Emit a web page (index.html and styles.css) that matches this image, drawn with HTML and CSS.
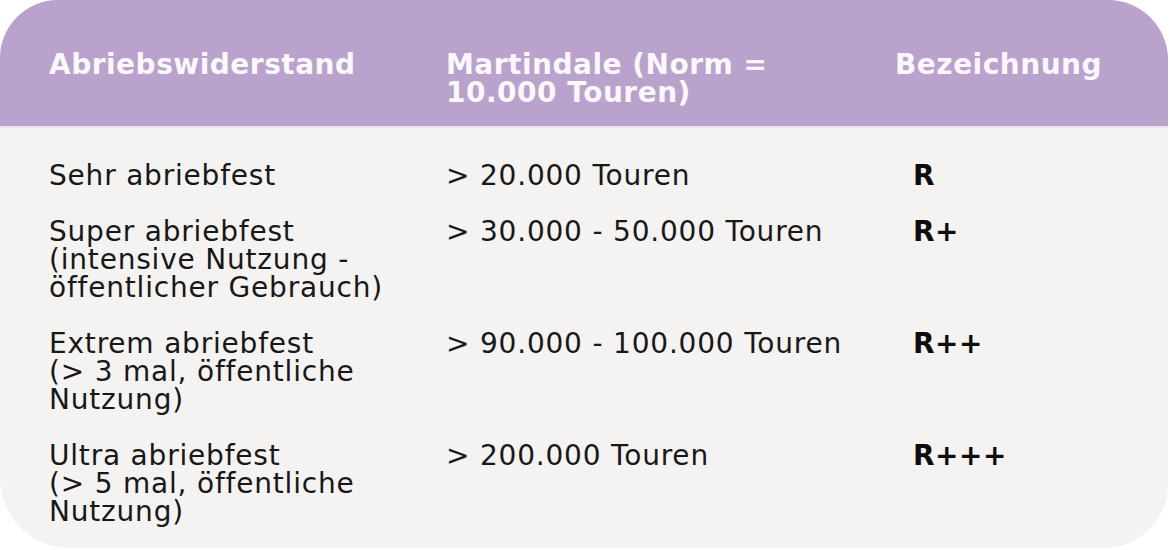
FILE: index.html
```html
<!DOCTYPE html>
<html lang="de">
<head>
<meta charset="utf-8">
<title>Abriebswiderstand</title>
<link rel="stylesheet" href="styles.css">
</head>
<body>
<div class="card">
  <div class="head">
    <div class="hcell c1">Abriebswiderstand</div>
    <div class="hcell c2">Martindale (Norm =<br>10.000 Touren)</div>
    <div class="hcell c3">Bezeichnung</div>
  </div>
  <div class="body">
    <div class="row">
      <div class="cell c1">Sehr abriebfest</div>
      <div class="cell c2">&gt; 20.000 Touren</div>
      <div class="cell c3 code">R</div>
    </div>
    <div class="row">
      <div class="cell c1">Super abriebfest<br>(intensive Nutzung -<br>öffentlicher Gebrauch)</div>
      <div class="cell c2">&gt; 30.000 - 50.000 Touren</div>
      <div class="cell c3 code">R+</div>
    </div>
    <div class="row">
      <div class="cell c1">Extrem abriebfest<br>(&gt; 3 mal, öffentliche<br>Nutzung)</div>
      <div class="cell c2">&gt; 90.000 - 100.000 Touren</div>
      <div class="cell c3 code">R++</div>
    </div>
    <div class="row">
      <div class="cell c1">Ultra abriebfest<br>(&gt; 5 mal, öffentliche<br>Nutzung)</div>
      <div class="cell c2">&gt; 200.000 Touren</div>
      <div class="cell c3 code">R+++</div>
    </div>
  </div>
</div>
</body>
</html>
```
FILE: styles.css
```css
html, body {
  margin: 0;
  padding: 0;
  background: #ffffff;
}
body {
  font-family: "DejaVu Sans", "Noto Sans", sans-serif;
}
.card {
  width: 1168px;
  height: 548px;
  background: #f4f3f2;
  border-radius: 58px 60px 64px 70px;
  overflow: hidden;
  display: flex;
  flex-direction: column;
}
.head {
  background: #b9a3cd;
  display: grid;
  grid-template-columns: 397px 449px 1fr;
  padding: 51px 0 19px 49px;
  border-bottom: 2px solid #e9e1ee;
  color: #fbf7fb;
  font-weight: 700;
  font-size: 28px;
  line-height: 28px;
  letter-spacing: 0.5px;
}
.body {
  padding: 20px 0 0 49px;
  color: #181818;
  font-size: 28px;
  line-height: 28px;
  letter-spacing: 0.8px;
}
.row {
  display: grid;
  grid-template-columns: 397px 449px 1fr;
  padding: 14px 0;
}
.cell.c3 {
  padding-left: 18px;
}
.code {
  font-weight: 700;
  color: #0d0d0d;
  letter-spacing: 0.5px;
}
```
